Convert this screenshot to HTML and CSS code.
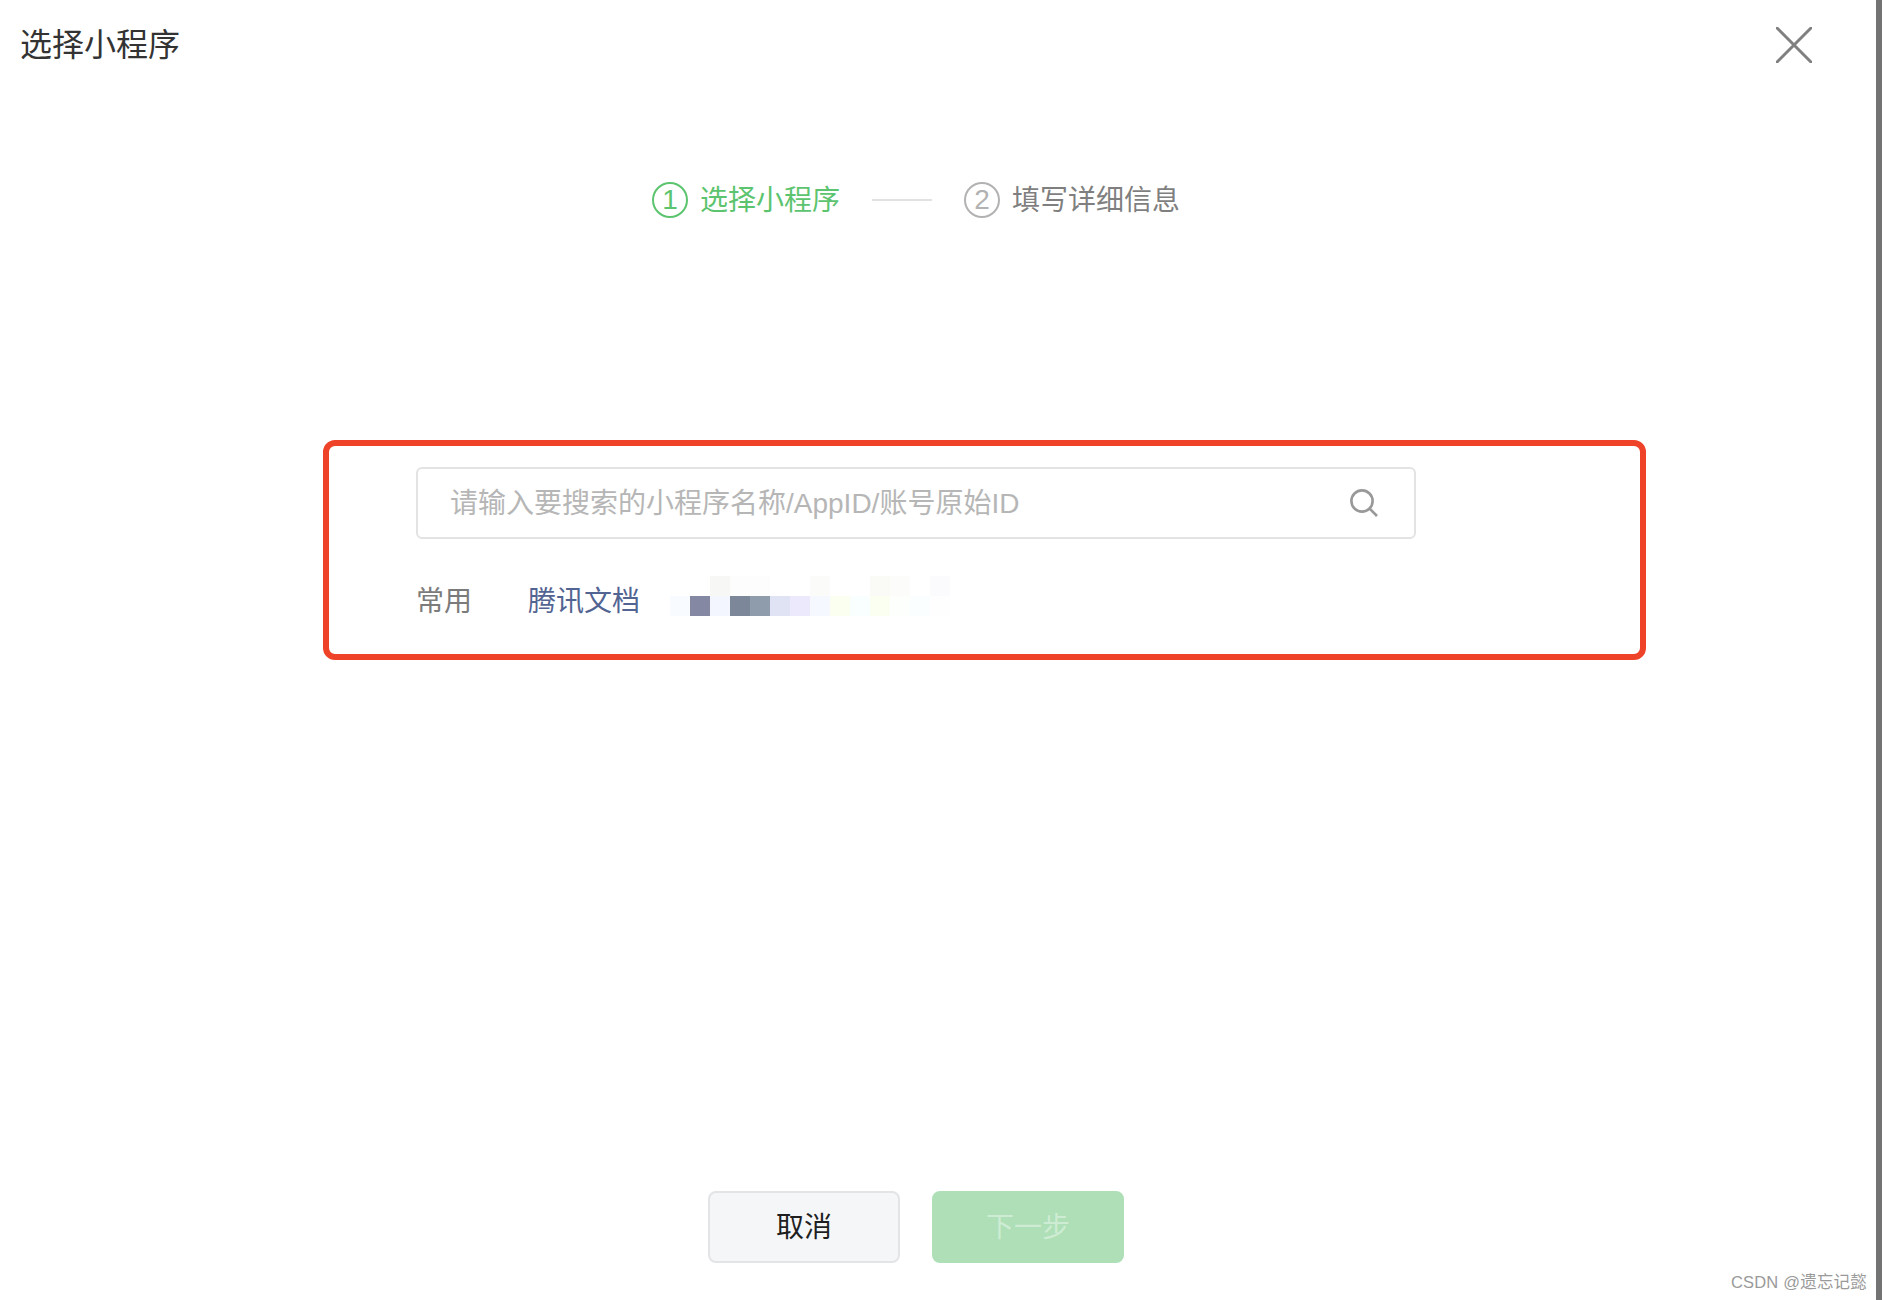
FILE: index.html
```html
<!DOCTYPE html>
<html lang="zh-CN">
<head>
<meta charset="utf-8">
<title>选择小程序</title>
<link rel="stylesheet" href="styles.css">
</head>
<body>
<div class="page">
  <main class="dialog">
    <header class="header">
      <h1 class="title">选择小程序</h1>
      <svg class="close" width="36" height="36" viewBox="0 0 36 36" aria-label="关闭"><path d="M1 1 35 35M35 1 1 35"/></svg>
    </header>
    <div class="steps">
      <span class="step step-active"><span class="num">1</span><span class="step-text">选择小程序</span></span>
      <span class="step-line"></span>
      <span class="step"><span class="num">2</span><span class="step-text">填写详细信息</span></span>
    </div>
    <section class="highlight">
      <div class="search">
        <span class="placeholder">请输入要搜索的小程序名称/AppID/账号原始ID</span>
        <svg class="search-icon" width="28" height="28" viewBox="0 0 28 28"><circle cx="12" cy="12" r="10.6"/><path d="M19.6 19.6 27 27"/></svg>
      </div>
      <div class="recent">
        <span class="recent-label">常用</span>
        <a class="recent-link">腾讯文档</a>
        <div class="mosaic" aria-hidden="true">
          <i></i><i></i><i style="background:#f7f7f5"></i><i style="background:#fdfdfd"></i><i style="background:#fdfdfe"></i><i></i><i></i><i style="background:#fbfbfa"></i><i></i><i></i><i style="background:#fafaf7"></i><i style="background:#fcfcfa"></i><i></i><i style="background:#fbfbfd"></i>
          <i style="background:#f8fbff"></i><i style="background:#8488a2"></i><i style="background:#f3f5ff"></i><i style="background:#7c8799"></i><i style="background:#8e9cab"></i><i style="background:#dfe3f3"></i><i style="background:#ece9fd"></i><i style="background:#f6f8ff"></i><i style="background:#fbfff0"></i><i style="background:#f9ffff"></i><i style="background:#fbfff2"></i><i style="background:#fdfffd"></i><i style="background:#fafeff"></i><i style="background:#fefefe"></i>
        </div>
      </div>
    </section>
    <footer class="actions">
      <button class="btn btn-default" type="button">取消</button>
      <button class="btn btn-primary" type="button" disabled>下一步</button>
    </footer>
  </main>
  <div class="scrollbar"></div>
  <span class="watermark">CSDN @遗忘记懿</span>
</div>
</body>
</html>
```

FILE: styles.css
```css
* { box-sizing: border-box; }
html, body { margin: 0; padding: 0; background: #fff; }
body {
  font-family: "Liberation Sans", "Noto Sans CJK SC", sans-serif;
  font-size: 28px;
  color: #333;
}
.page { position: relative; display: flex; width: 1882px; height: 1300px; overflow: hidden; }
.dialog { flex: 1; display: flex; flex-direction: column; }
.scrollbar { width: 6px; background: #737373; }

.header { display: flex; justify-content: space-between; align-items: center; height: 92px; padding: 0 64px 2px 20px; }
.title { margin: 0; font-size: 32px; font-weight: 400; line-height: 44px; color: #333; }
.close path { stroke: #808080; stroke-width: 3; fill: none; stroke-linecap: round; }

.steps { display: flex; align-items: center; height: 36px; margin: 90px 0 0 652px; color: #7f7f7f; line-height: 36px; }
.step { display: flex; align-items: center; }
.step-active { color: #5cc46e; }
.step-text { padding-top: 2px; }
.num {
  display: flex; align-items: center; justify-content: center;
  width: 36px; height: 36px; margin-right: 12px;
  border: 2px solid #b2b2b2; border-radius: 50%;
  font-size: 28px; line-height: 30px; color: #b2b2b2;
}
.step-active .num { border-color: #5cc46e; color: #5cc46e; }
.step-line { width: 60px; height: 2px; margin: 0 32px; background: #e2e2e2; }

.highlight {
  width: 1323px; height: 220px; margin: 222px 0 0 323px; padding: 21px 87px;
  border: 6px solid #ee4328; border-radius: 12px;
}
.search {
  display: flex; align-items: center; justify-content: space-between;
  width: 1000px; height: 72px; padding: 0 36px 0 32px;
  border: 2px solid #e3e3e3; border-radius: 6px;
}
.placeholder { padding-top: 2px; color: #b6b6b6; line-height: 40px; }
.search-icon circle, .search-icon path { fill: none; stroke: #999; stroke-width: 2.6; }

.recent { display: flex; align-items: center; height: 40px; margin-top: 40px; }
.recent-label { width: 112px; color: #7b7b7b; }
.recent-link { width: 142px; color: #526492; }
.mosaic { display: grid; grid-template-columns: repeat(14, 20px); grid-auto-rows: 20px; margin-bottom: 6px; }

.actions { display: flex; gap: 32px; margin: 531px 0 0 708px; }
.btn {
  width: 192px; height: 72px; padding: 2px 0 0;
  border: 2px solid #e3e4e6; border-radius: 8px;
  font: inherit; line-height: 40px;
}
.btn-default { background: #f5f6f8; color: #1f1f1f; }
.btn-primary { border-color: #aedfb6; background: #aedfb6; color: #cdecd3; }

.watermark { position: absolute; right: 15px; bottom: 8px; font-size: 16.5px; letter-spacing: 0.2px; line-height: 20px; color: #9a9a9a; }
```
